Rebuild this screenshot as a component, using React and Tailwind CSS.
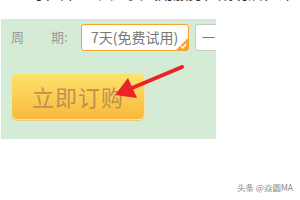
import React from "react";

const font = { fontFamily: '"Noto Sans CJK SC", "Liberation Sans", sans-serif' };

export default function App() {
    return (
        <div className="relative w-[300px] h-[200px] bg-white overflow-hidden" style={font}>
            {/* clipped line of text from above */}
            <div className="h-[19px] overflow-hidden">
                <div className="-mt-[18px] pl-[30px] text-[15px] leading-[21px] text-[#333] whitespace-nowrap">
                    号，开通7天免费试用服务，成功后，即可使用，在线购买
                </div>
            </div>

            {/* green panel */}
            <div className="ml-[1px] w-[215px] h-[120px] bg-[#d4ebd5] pt-[5px] pl-[10px] overflow-hidden">
                <div className="flex items-center h-[26px]">
                    <span className="shrink-0 w-[40px] text-[13px] text-[#9a9a9a]">周</span>
                    <span className="shrink-0 w-[30px] text-[13px] text-[#9a9a9a]">期:</span>
                    <div className="relative shrink-0 flex items-center w-[108px] h-[27px] bg-white border border-[#f6a42c] rounded-[3px] pl-[9px] text-[14px] text-[#777]">
                        7天(免费试用)
                        <div className="absolute right-0 bottom-0 w-0 h-0 border-l-[12px] border-l-transparent border-b-[12px] border-b-[#f6a42c]" />
                        <svg className="absolute right-[1px] bottom-[1px]" width="7" height="6" viewBox="0 0 7 6">
                            <path d="M1 3 L3 5 L6 1" stroke="white" strokeWidth="1.3" fill="none" />
                        </svg>
                    </div>
                    <div className="shrink-0 ml-[6px] flex items-center w-[40px] h-[27px] bg-white border border-[#c9c9c9] rounded-[3px] pl-[6px] text-[13px] text-[#777]">
                        一
                    </div>
                </div>

                <div className="mt-[23px] w-[134px] h-[47px] rounded-[6px] border border-[#f9e3b0] bg-gradient-to-b from-[#fde26a] to-[#f8b93c] flex items-center justify-center shadow-[0_1px_0_#e8c98a]">
                    <span className="text-[22px] tracking-[1px] text-[#c0904e]">立即订购</span>
                </div>
            </div>

            {/* red arrow */}
            <svg className="absolute left-0 top-0" width="300" height="200" viewBox="0 0 300 200">
                <line x1="182" y1="67" x2="132" y2="88" stroke="#ec2227" strokeWidth="4" strokeLinecap="round" />
                <polygon points="115,95 128,78 137,98" fill="#ec2227" />
            </svg>

            {/* watermark */}
            <div className="absolute right-[7px] top-[181px] text-[8.5px] text-[#888] whitespace-nowrap">
                头条 @焱圆MA
            </div>
        </div>
    );
}
